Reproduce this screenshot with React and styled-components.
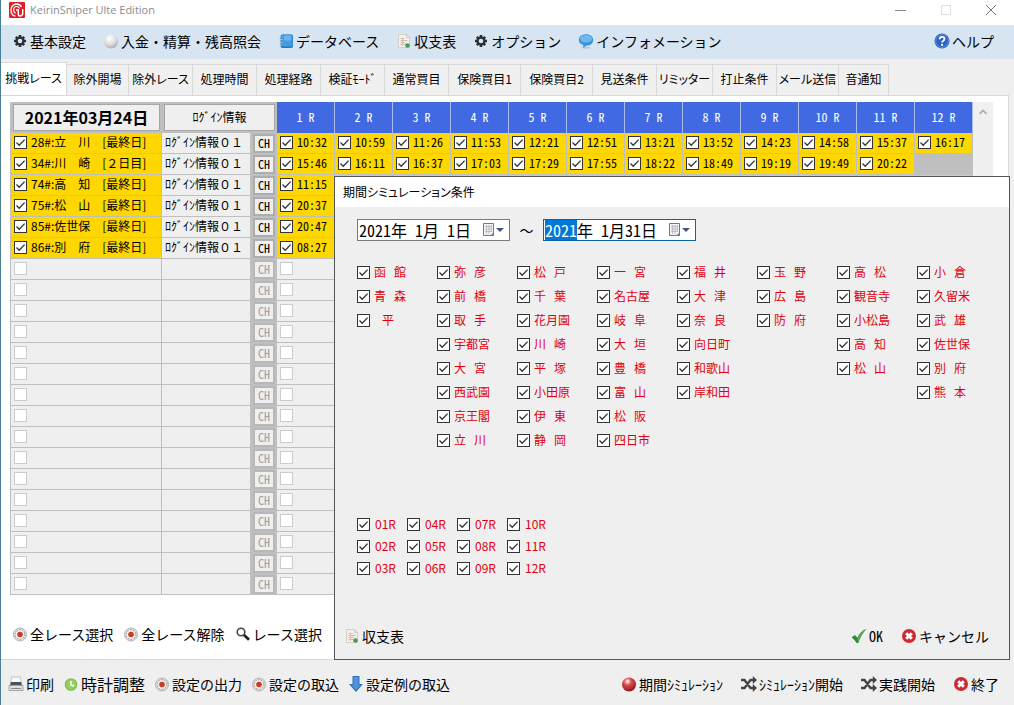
import React, {useEffect, useRef} from "react";
import styled, {createGlobalStyle} from "styled-components";

const face = '#efefef'
const line = '#bfbfbf'
const yellow = '#ffd700'
const royal = '#4169e1'
const red = '#e00010'

const tick = "url(\"data:image/svg+xml,%3Csvg xmlns='http://www.w3.org/2000/svg' width='11' height='11'%3E%3Cpath d='M1.5 5.5L4.2 8.2L9.6 2.6' fill='none' stroke='%23333' stroke-width='1.3'/%3E%3C/svg%3E\")"

const GlobalStyle = createGlobalStyle`
  * {
    box-sizing: border-box;
  }
  body {
    margin: 0;
    background: ${face};
    color: #000;
    font-family: "Noto Sans CJK JP", sans-serif;
    font-size: 12px;
    line-height: 16px;
  }
  button, input {
    font-family: inherit;
    color: inherit;
  }
`
const Window = styled.div`
  position: relative;
  display: flex;
  flex-direction: column;
  min-height: 100vh;
  overflow: hidden;
  border-left: 1px solid #4a7f96;
`
const TitleBar = styled.header`
  display: flex;
  align-items: center;
  height: 25px;
  padding: 0 17px 6px 8px;
  background: #fff;
`
const AppName = styled.h1`
  flex: 1;
  margin: 0 0 0 5px;
  color: #8c8c8c;
  font-family: "Open Sans", sans-serif;
  font-size: 11px;
  font-weight: 400;
`
const WindowButtons = styled.div`
  display: flex;
  gap: 33px;
`
const WindowButton = styled.button`
  display: flex;
  padding: 0;
  border: 0;
  background: none;
`
const MenuBar = styled.nav`
  display: flex;
  align-items: center;
  gap: 17px;
  height: 34px;
  padding: 0 20px 2px 11px;
  background: #d7e4f2;
`
const Spacer = styled.div`
  flex: 1;
`
const ToolButton = styled.button`
  display: flex;
  align-items: center;
  gap: 2px;
  padding: 0;
  border: 0;
  background: none;
  font-size: ${props => props.$large ? '16px' : '14px'};
  line-height: 20px;
  white-space: nowrap;
  font-feature-settings: ${props => props.$narrow ? '"hwid"' : 'normal'};
  svg {
    flex: none;
  }
`
const Tabs = styled.div`
  display: flex;
  align-items: flex-end;
  height: 36px;
`
const Tab = styled.button`
  flex: none;
  width: ${props => props.$width}px;
  height: ${props => props.$active ? '33px' : '31px'};
  padding: 0 0 3px;
  border: solid #d9d9d9;
  border-width: 1px 1px 0 0;
  background: ${props => props.$active ? '#fff' : '#f0f0f0'};
  font-size: 12px;
  white-space: nowrap;
  font-feature-settings: "palt";
`
const Panel = styled.main`
  flex: 1;
  display: flex;
  flex-direction: column;
  margin-right: 5px;
  padding: 6px 15px 15px 9px;
  border: solid #d9d9d9;
  border-width: 1px 1px 1px 0;
  background: #fff;
`
const TableArea = styled.div`
  display: flex;
`
const Table = styled.table`
  flex: 1;
  table-layout: fixed;
  border-spacing: 0;
  border-left: 1px solid ${line};
`
const Column = styled.col`
  width: ${props => props.$width ? props.$width + 'px' : 'auto'};
`
const HeadCell = styled.th`
  height: 31px;
  padding: 2px;
  background: ${line};
`
const HeadButton = styled.button`
  display: block;
  width: 100%;
  height: 27px;
  padding: 0 0 2px;
  border: 1px solid #a6a6a6;
  background: ${face};
  font-size: ${props => props.$large ? '16px' : '12px'};
  font-weight: ${props => props.$large ? '700' : '400'};
`
const RaceHead = styled.th`
  height: 31px;
  padding: 0 0 2px;
  border-right: 1px solid #a9bcec;
  background: ${royal};
  color: #fff;
  font-size: 12px;
  font-weight: 400;
  font-feature-settings: "hwid";
`
const Cell = styled.td`
  height: 21px;
  padding: 0 0 2px 3px;
  border: solid ${line};
  border-width: 0 1px 1px 0;
  background: ${props => props.$color || face};
  white-space: pre;
`
const ButtonCell = styled.td`
  height: 21px;
  padding: 0 2px;
  background: ${line};
`
const SmallButton = styled.button`
  display: block;
  width: 100%;
  height: 19px;
  padding: 0 0 2px;
  border: 2px solid #adadad;
  background: ${face};
  font-size: 12px;
  line-height: 12px;
  font-feature-settings: "hwid";
  &:disabled {
    border-color: #b8b8b8;
    color: #a0a0a0;
  }
`
const CheckLabel = styled.label`
  display: flex;
  align-items: center;
  gap: ${props => props.$gap || 4}px;
  color: ${props => props.$color || 'inherit'};
  font-size: 12px;
  line-height: 16px;
  white-space: pre;
  font-feature-settings: ${props => props.$narrow ? '"hwid"' : 'normal'};
`
const Checkbox = styled.input.attrs({type: 'checkbox'})`
  appearance: none;
  flex: none;
  width: 13px;
  height: 13px;
  margin: 0;
  border: 1px solid #333;
  background: #fff;
  &:checked {
    background: #fff ${tick} center no-repeat;
  }
  &:disabled {
    border-color: #ccc;
  }
`
const ScrollBar = styled.div`
  display: flex;
  justify-content: center;
  width: 20px;
  padding-top: 7px;
  background: #f0f0f0;
`
const PanelTools = styled.div`
  display: flex;
  align-items: center;
  gap: 10px;
  margin: auto 0 0 2px;
`
const BottomBar = styled.footer`
  display: flex;
  align-items: center;
  gap: 9px;
  height: 45px;
  padding: 2px 15px 0 7px;
`
const BottomRight = styled.div`
  display: flex;
  gap: 18px;
  margin-left: auto;
`
const Dialog = styled.section`
  position: absolute;
  top: 176px;
  left: 333px;
  right: 4px;
  bottom: 45px;
  display: flex;
  flex-direction: column;
  border: 1px solid #555;
  background: ${face};
`
const DialogTitle = styled.h2`
  margin: 0;
  padding: 0 8px;
  background: #fff;
  font-size: 12px;
  font-weight: 400;
  line-height: 30px;
  font-feature-settings: "palt";
`
const DialogBody = styled.div`
  flex: 1;
  padding: 12px 12px 0 22px;
`
const DateRow = styled.div`
  display: flex;
  align-items: center;
  font-size: 14px;
`
const Tilde = styled.span`
  width: 33px;
  text-align: center;
`
const DateBox = styled.div`
  display: flex;
  align-items: center;
  width: 153px;
  height: 22px;
  padding-right: 5px;
  border: 1px solid #7a7a7a;
  background: #fff;
  &:focus-within {
    border-color: #0a64ad;
  }
`
const DateInput = styled.input`
  flex: 1;
  min-width: 0;
  height: 20px;
  padding: 0 0 0 1px;
  border: 0;
  outline: 0;
  background: none;
  font-size: 16px;
  line-height: 20px;
  font-feature-settings: "hwid";
  &::selection {
    background: #0078d7;
    color: #fff;
  }
`
const VenueGrid = styled.div`
  display: grid;
  grid-template-columns: repeat(8, 1fr);
  grid-template-rows: repeat(8, 24px);
  grid-auto-flow: column;
  margin-top: 19px;
`
const RaceGrid = styled.div`
  display: grid;
  grid-template-columns: repeat(4, 50px);
  grid-template-rows: repeat(3, 22px);
  grid-auto-flow: column;
  margin-top: 61px;
`
const DialogFooter = styled.div`
  display: flex;
  align-items: center;
  gap: 18px;
  padding: 0 20px 13px 9px;
`

const Icon = ({children, size = 16}) => (
    <svg width={size} height={size} viewBox='0 0 16 16' aria-hidden='true'>{children}</svg>
)
const GearIcon = () => (
    <Icon>
        <g stroke='#2b2f33' strokeWidth='2.600'>
            <path d='M8 2v12M2 8h12M3.800 3.800l8.400 8.400M12.200 3.800l-8.400 8.400'/>
        </g>
        <circle cx='8' cy='8' r='4.600' fill='#2b2f33'/>
        <circle cx='8' cy='8' r='2.300' fill='#d7e4f2'/>
    </Icon>
)
const BallIcon = ({color}) => (
    <Icon>
        <defs>
            <radialGradient id={'ball' + color} cx='40%' cy='28%' r='75%'>
                <stop offset='0' stopColor='#fff'/>
                <stop offset={color === 'red' ? '.35' : '.6'} stopColor={color === 'red' ? '#d9534f' : '#dcdcdc'}/>
                <stop offset='1' stopColor={color === 'red' ? '#8c1016' : '#a8a8a8'}/>
            </radialGradient>
        </defs>
        <circle cx='8' cy='8.500' r='7' fill={`url(#ball${color})`}/>
    </Icon>
)
const DatabaseIcon = () => (
    <Icon>
        <rect x='2.500' y='1.500' width='12.500' height='13.500' rx='2' fill='#2676bd'/>
        <rect x='4' y='1.500' width='10.500' height='12' rx='1.500' fill='#3f9be6'/>
        <rect x='6' y='2.500' width='7' height='5' rx='1' fill='#69b5f0'/>
        <path d='M1.500 4h3M1.500 6.700h3M1.500 9.400h3M1.500 12h3' stroke='#a9c4da' strokeWidth='1.200'/>
    </Icon>
)
const SheetIcon = () => (
    <Icon>
        <path d='M2.500 1.500h8l3 3v10h-11z' fill='#f4f1ea' stroke='#d4cec6'/>
        <path d='M10.500 1.500v3h3' fill='none' stroke='#cfc9c0'/>
        <path d='M4.500 5.500h4M4.500 7.500h7M4.500 9.500h5M4.500 11.500h5' stroke='#c4c0b9'/>
        <path d='M6.500 5v8' stroke='#e0bfae'/>
        <circle cx='11.500' cy='12.500' r='2.300' fill='#4c9a5a'/>
    </Icon>
)
const BubbleIcon = () => (
    <Icon>
        <ellipse cx='8' cy='14.800' rx='4.500' ry='.8' fill='#b4c0cb'/>
        <path d='M8 1.200c4.200 0 7.200 2.400 7.200 5.800S12.200 12.600 8.800 12.600L5 14.800l.3-2.700C2.600 11.300.8 9.500.8 7 .8 3.600 3.800 1.200 8 1.200z' fill='#3a95dc'/>
        <ellipse cx='8' cy='5.800' rx='6' ry='3.800' fill='#6fb8ef'/>
    </Icon>
)
const HelpIcon = () => (
    <Icon>
        <circle cx='8' cy='8' r='7.500' fill='#2c63c4'/>
        <circle cx='8' cy='8' r='6.300' fill='none' stroke='#6f9be4' strokeWidth='.8'/>
        <path d='M5.600 6.200c0-3.200 4.900-3.100 4.900-.3 0 1.900-2.400 1.900-2.400 3.700' fill='none' stroke='#fff' strokeWidth='1.800'/>
        <circle cx='8.100' cy='11.800' r='1.100' fill='#fff'/>
    </Icon>
)
const RecordIcon = () => (
    <Icon>
        <circle cx='8' cy='8.500' r='6.500' fill='#dedede' stroke='#b4b4b4'/>
        <circle cx='8' cy='8.500' r='4.800' fill='#f2f0ef' stroke='#8c8c8c' strokeDasharray='1.500 1.500'/>
        <circle cx='8' cy='8.500' r='2.800' fill='#cf3a22'/>
    </Icon>
)
const SearchIcon = () => (
    <Icon>
        <circle cx='6' cy='6' r='3.800' fill='none' stroke='#444' strokeWidth='1.600'/>
        <path d='M9 9l5 4.800' stroke='#222' strokeWidth='2.800'/>
    </Icon>
)
const PrinterIcon = () => (
    <Icon>
        <path d='M3.500 1h9l1 7h-11z' fill='#fafafa' stroke='#c4c4c4'/>
        <path d='M3 6h10l1.500 4.500h-13z' fill='#4d5358'/>
        <path d='M1 9.500h14v5H1z' fill='#dedede' stroke='#a4a4a4'/>
        <path d='M3 12.500h10' stroke='#8a8a8a'/>
    </Icon>
)
const ClockIcon = () => (
    <Icon>
        <circle cx='8' cy='8.500' r='6.300' fill='#7fc04c'/>
        <circle cx='8' cy='8.500' r='5' fill='#96d062'/>
        <path d='M8 5v4l3 1' fill='none' stroke='#fff' strokeWidth='1.500'/>
    </Icon>
)
const DownIcon = () => (
    <Icon>
        <path d='M4.500 0h7v8h3.500L8 16 1 8h3.500z' fill='#346fb8'/>
        <path d='M5.500 1h5v8h2.200L8 14.300 3.300 9h2.200z' fill='#4f93dc'/>
    </Icon>
)
const ShuffleIcon = () => (
    <Icon>
        <path d='M0 4h3.500l6 8H13M0 12h3.500l6-8H13' fill='none' stroke='#444' strokeWidth='2.300'/>
        <path d='M11.800 0L16 4l-4.200 4zM11.800 8l4.200 4-4.200 4z' fill='#444'/>
    </Icon>
)
const CrossIcon = () => (
    <Icon>
        <circle cx='8' cy='8' r='7' fill='#cc2a35'/>
        <path d='M5.200 5.200l5.600 5.600M10.800 5.200l-5.600 5.600' stroke='#fff' strokeWidth='3'/>
    </Icon>
)
const CheckIcon = () => (
    <Icon>
        <path d='M.5 9.500L4 7l2.300 2.800C8.500 5.500 11 2.500 15.500.8 11.800 5 9.500 9 7.300 15H5.500C4 12.300 2.500 10.800.5 9.500z' fill='#2f8a34'/>
        <path d='M6.500 11.500C8.500 7 11 4 14.300 1.800 11.300 5.500 9 9 6.800 13.500z' fill='#6cc254'/>
    </Icon>
)
const LogoIcon = () => (
    <Icon>
        <rect width='16' height='16' rx='1' fill='#e21f26'/>
        <path d='M12.500 5C11.500 2.800 9.500 2 7.500 2 4.300 2 2 4.600 2 8s2 5.800 4.500 6.200' fill='none' stroke='#fff' strokeWidth='1.300'/>
        <path d='M10.500 6.500C10 5 8.800 4.500 7.500 4.500 5.700 4.500 4.600 6 4.600 8c0 1.600.6 2.800 1.900 3.400' fill='none' stroke='#fff' strokeWidth='1.200'/>
        <path d='M7 8h2.300v4.200c0 1 .5 1.800 1.700 1.800 1.700 0 2.700-1 2.700-2.700V7' fill='none' stroke='#fff' strokeWidth='1.400'/>
    </Icon>
)
const CalendarIcon = () => (
    <svg width='21' height='14' viewBox='0 0 21 14' aria-hidden='true'>
        <path d='M.5.500h10v12h-10z' fill='#f3f3f5' stroke='#777'/>
        <path d='M2 3.500h7M2 6h7M2 8.500h7M3.500 2v9M6 2v9M8.500 2v7' stroke='#b3b3bd' strokeWidth='.8'/>
        <path d='M10.500 9.500l-3 3h3z' fill='#777'/>
        <path d='M13 5h8l-4 4z' fill='#3f587d'/>
    </svg>
)
const RedBallIcon = () => <BallIcon color='red'/>

const menu = [
    {icon: GearIcon, text: '基本設定'},
    {icon: BallIcon, text: '入金・精算・残高照会'},
    {icon: DatabaseIcon, text: 'データベース'},
    {icon: SheetIcon, text: '収支表'},
    {icon: GearIcon, text: 'オプション'},
    {icon: BubbleIcon, text: 'インフォメーション'}
]

const tabs = [
    {text: '挑戦レース', width: 66},
    {text: '除外開場', width: 62},
    {text: '除外レース', width: 64},
    {text: '処理時間', width: 64},
    {text: '処理経路', width: 64},
    {text: '検証ﾓｰﾄﾞ', width: 64},
    {text: '通常買目', width: 64},
    {text: '保険買目1', width: 72},
    {text: '保険買目2', width: 72},
    {text: '見送条件', width: 64},
    {text: 'リミッター', width: 56},
    {text: '打止条件', width: 64},
    {text: 'メール送信', width: 62},
    {text: '音通知', width: 50}
]

const meetings = [
    {name: '28#:立　川　[最終日]', times: ['10:32', '10:59', '11:26', '11:53', '12:21', '12:51', '13:21', '13:52', '14:23', '14:58', '15:37', '16:17']},
    {name: '34#:川　崎　[２日目]', times: ['15:46', '16:11', '16:37', '17:03', '17:29', '17:55', '18:22', '18:49', '19:19', '19:49', '20:22', null]},
    {name: '74#:高　知　[最終日]', times: ['11:15']},
    {name: '75#:松　山　[最終日]', times: ['20:37']},
    {name: '85#:佐世保　[最終日]', times: ['20:47']},
    {name: '86#:別　府　[最終日]', times: ['08:27']}
]

const venues = [
    ['函   館', '青   森', '   平'],
    ['弥   彦', '前   橋', '取   手', '宇都宮', '大   宮', '西武園', '京王閣', '立   川'],
    ['松   戸', '千   葉', '花月園', '川   崎', '平   塚', '小田原', '伊   東', '静   岡'],
    ['一   宮', '名古屋', '岐   阜', '大   垣', '豊   橋', '富   山', '松   阪', '四日市'],
    ['福   井', '大   津', '奈   良', '向日町', '和歌山', '岸和田'],
    ['玉   野', '広   島', '防   府'],
    ['高   松', '観音寺', '小松島', '高   知', '松   山'],
    ['小   倉', '久留米', '武   雄', '佐世保', '別   府', '熊   本']
]

const raceNumbers = Array.from({length: 12}, (_, i) => i + 1)
const emptyRows = Array.from({length: 16}, (_, i) => i)

const Tool = ({icon: Picture, text, ...rest}) => (
    <ToolButton type='button' {...rest}>
        <Picture/>
        <span>{text}</span>
    </ToolButton>
)

const MeetingRow = ({meeting}) => (
    <tr>
        <Cell $color={yellow}>
            <CheckLabel><Checkbox defaultChecked/>{meeting.name}</CheckLabel>
        </Cell>
        <Cell>ﾛｸﾞｲﾝ情報０１</Cell>
        <ButtonCell><SmallButton type='button'>CH</SmallButton></ButtonCell>
        {raceNumbers.map((number, i) => {
            const time = meeting.times[i]
            return (
                <Cell key={number} $color={time === null ? line : yellow}>
                    {time ? <CheckLabel $narrow><Checkbox defaultChecked/>{time}</CheckLabel> : null}
                </Cell>
            )
        })}
    </tr>
)

const EmptyRow = () => (
    <tr>
        <Cell><CheckLabel><Checkbox disabled aria-label='開催'/></CheckLabel></Cell>
        <Cell/>
        <ButtonCell><SmallButton type='button' disabled>CH</SmallButton></ButtonCell>
        {raceNumbers.map(number => (
            <Cell key={number}>
                {number === 1 ? <CheckLabel><Checkbox disabled aria-label='1 R'/></CheckLabel> : null}
            </Cell>
        ))}
    </tr>
)

const DateField = ({value, label, selected}) => {

    const input = useRef(null)

    useEffect(() => {
        if (selected) {
            input.current.focus()
            input.current.setSelectionRange(0, 4)
        }
    }, [selected])

    return (
        <DateBox>
            <DateInput ref={input} aria-label={label} defaultValue={value}/>
            <WindowButton type='button' aria-label='カレンダー'><CalendarIcon/></WindowButton>
        </DateBox>
    )
}

const SimulationDialog = () => (
    <Dialog role='dialog' aria-labelledby='simulation-title'>
        <DialogTitle id='simulation-title'>期間シミュレーション条件</DialogTitle>
        <DialogBody>
            <DateRow>
                <DateField value='2021年 1月 1日' label='開始日'/>
                <Tilde>～</Tilde>
                <DateField value='2021年 1月31日' label='終了日' selected/>
            </DateRow>
            <VenueGrid>
                {venues.map((column, x) => column.map((name, y) => (
                    <CheckLabel key={name} $color={red} style={{gridColumn: x + 1, gridRow: y + 1}}>
                        <Checkbox defaultChecked/>{name}
                    </CheckLabel>
                )))}
            </VenueGrid>
            <RaceGrid>
                {raceNumbers.map(number => (
                    <CheckLabel key={number} $color={red} $gap={5}>
                        <Checkbox defaultChecked/>{String(number).padStart(2, '0')}R
                    </CheckLabel>
                ))}
            </RaceGrid>
        </DialogBody>
        <DialogFooter>
            <Tool icon={SheetIcon} text='収支表'/>
            <Spacer/>
            <Tool icon={CheckIcon} text='OK' $narrow/>
            <Tool icon={CrossIcon} text='キャンセル'/>
        </DialogFooter>
    </Dialog>
)

const App = () => (
    <Window>
        <GlobalStyle/>
        <TitleBar>
            <LogoIcon/>
            <AppName>KeirinSniper Ulte Edition</AppName>
            <WindowButtons>
                <WindowButton type='button' aria-label='最小化'>
                    <svg width='12' height='12'><path d='M0 6.500h11' stroke='#888'/></svg>
                </WindowButton>
                <WindowButton type='button' aria-label='最大化'>
                    <svg width='12' height='12'><path d='M1.500 1.500h9v9h-9z' fill='none' stroke='#ddd'/></svg>
                </WindowButton>
                <WindowButton type='button' aria-label='閉じる'>
                    <svg width='12' height='12'><path d='M1 1l10 10M11 1L1 11' stroke='#777'/></svg>
                </WindowButton>
            </WindowButtons>
        </TitleBar>
        <MenuBar>
            {menu.map(item => <Tool key={item.text} icon={item.icon} text={item.text}/>)}
            <Spacer/>
            <Tool icon={HelpIcon} text='ヘルプ'/>
        </MenuBar>
        <Tabs role='tablist'>
            {tabs.map((tab, i) => (
                <Tab key={tab.text} type='button' role='tab' aria-selected={i === 0} $active={i === 0} $width={tab.width}>
                    {tab.text}
                </Tab>
            ))}
        </Tabs>
        <Panel>
            <TableArea>
                <Table>
                    <colgroup>
                        <Column $width={151}/>
                        <Column $width={89}/>
                        <Column $width={26}/>
                        {raceNumbers.map(number => <Column key={number}/>)}
                    </colgroup>
                    <thead>
                    <tr>
                        <HeadCell><HeadButton type='button' $large>2021年03月24日</HeadButton></HeadCell>
                        <HeadCell colSpan={2}><HeadButton type='button'>ﾛｸﾞｲﾝ情報</HeadButton></HeadCell>
                        {raceNumbers.map(number => <RaceHead key={number}>{number} R</RaceHead>)}
                    </tr>
                    </thead>
                    <tbody>
                    {meetings.map(meeting => <MeetingRow key={meeting.name} meeting={meeting}/>)}
                    {emptyRows.map(row => <EmptyRow key={row}/>)}
                    </tbody>
                </Table>
                <ScrollBar>
                    <svg width='8' height='6'><path d='M.5 5L4 1.500 7.500 5' fill='none' stroke='#aaa' strokeWidth='1.600'/></svg>
                </ScrollBar>
            </TableArea>
            <PanelTools>
                <Tool icon={RecordIcon} text='全レース選択'/>
                <Tool icon={RecordIcon} text='全レース解除'/>
                <Tool icon={SearchIcon} text='レース選択'/>
            </PanelTools>
        </Panel>
        <BottomBar>
            <Tool icon={PrinterIcon} text='印刷'/>
            <Tool icon={ClockIcon} text='時計調整' $large/>
            <Tool icon={RecordIcon} text='設定の出力'/>
            <Tool icon={RecordIcon} text='設定の取込'/>
            <Tool icon={DownIcon} text='設定例の取込'/>
            <BottomRight>
                <Tool icon={RedBallIcon} text='期間ｼﾐｭﾚｰｼｮﾝ'/>
                <Tool icon={ShuffleIcon} text='ｼﾐｭﾚｰｼｮﾝ開始'/>
                <Tool icon={ShuffleIcon} text='実践開始'/>
                <Tool icon={CrossIcon} text='終了'/>
            </BottomRight>
        </BottomBar>
        <SimulationDialog/>
    </Window>
)

export default App
